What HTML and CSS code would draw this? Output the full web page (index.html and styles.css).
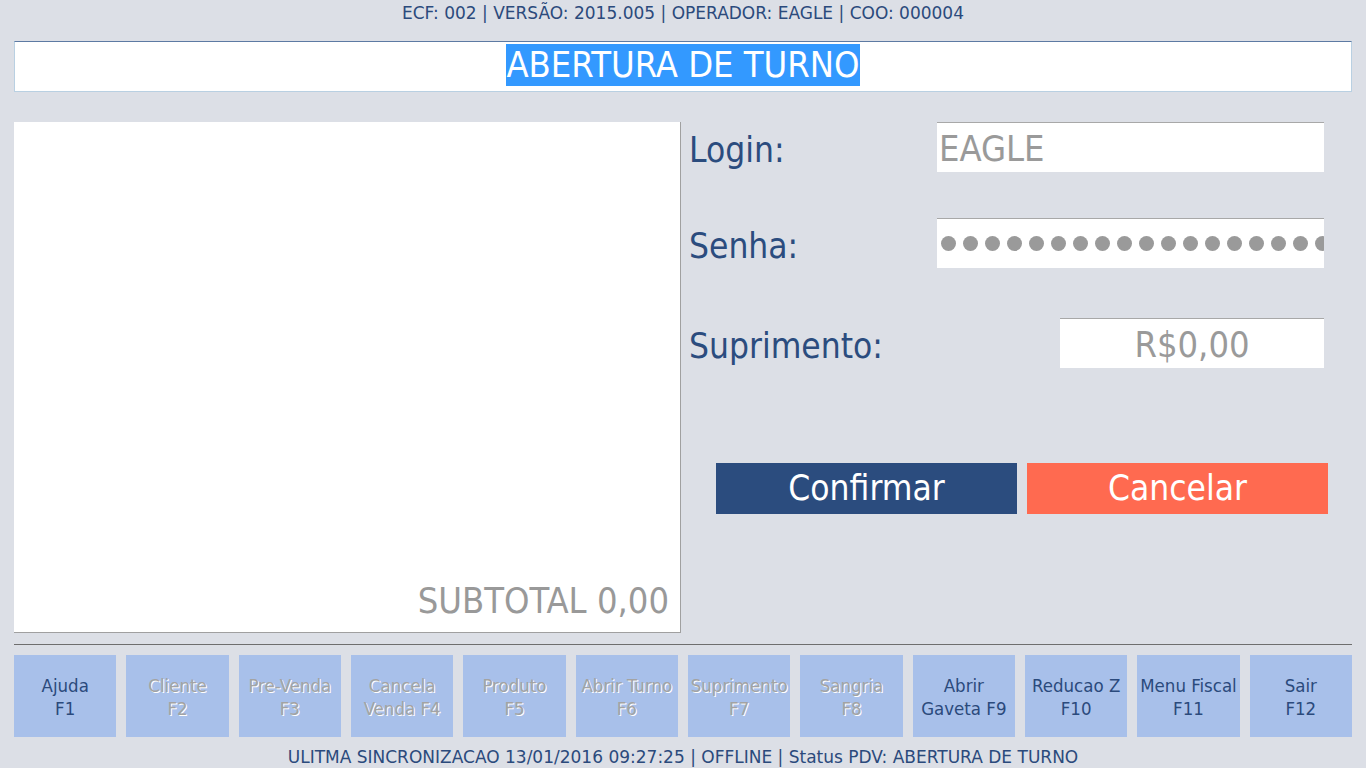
FILE: index.html
```html
<!DOCTYPE html>
<html lang="pt-BR">
<head>
<meta charset="utf-8">
<title>PDV - Abertura de Turno</title>
<link rel="stylesheet" href="styles.css">
</head>
<body>
<div class="app">
  <header class="info">ECF: 002 | VERSÃO: 2015.005 | OPERADOR: EAGLE | COO: 000004</header>
  <div class="title-box"><span class="title-sel">ABERTURA DE TURNO</span></div>
  <main class="main">
    <section class="receipt">
      <div class="subtotal">SUBTOTAL 0,00</div>
    </section>
    <section class="form">
      <div class="row row-login">
        <label class="label">Login:</label>
        <div class="field field-wide"><span class="field-text">EAGLE</span></div>
      </div>
      <div class="row row-senha">
        <label class="label">Senha:</label>
        <div class="field field-wide dots">
          <span class="dot"></span><span class="dot"></span><span class="dot"></span><span class="dot"></span><span class="dot"></span><span class="dot"></span><span class="dot"></span><span class="dot"></span><span class="dot"></span><span class="dot"></span><span class="dot"></span><span class="dot"></span><span class="dot"></span><span class="dot"></span><span class="dot"></span><span class="dot"></span><span class="dot"></span><span class="dot"></span><span class="dot"></span>
        </div>
      </div>
      <div class="row row-sup">
        <label class="label">Suprimento:</label>
        <div class="field field-money"><span class="field-text">R$0,00</span></div>
      </div>
      <div class="actions">
        <button class="btn btn-confirm">Confirmar</button>
        <button class="btn btn-cancel">Cancelar</button>
      </div>
    </section>
  </main>
  <hr class="sep">
  <nav class="keys">
    <div class="key">Ajuda<br>F1</div>
    <div class="key off">Cliente<br>F2</div>
    <div class="key off">Pre-Venda<br>F3</div>
    <div class="key off">Cancela<br>Venda F4</div>
    <div class="key off">Produto<br>F5</div>
    <div class="key off">Abrir Turno<br>F6</div>
    <div class="key off">Suprimento<br>F7</div>
    <div class="key off">Sangria<br>F8</div>
    <div class="key">Abrir<br>Gaveta F9</div>
    <div class="key">Reducao Z<br>F10</div>
    <div class="key">Menu Fiscal<br>F11</div>
    <div class="key">Sair<br>F12</div>
  </nav>
  <footer class="status">ULITMA SINCRONIZACAO 13/01/2016 09:27:25 | OFFLINE | Status PDV: ABERTURA DE TURNO</footer>
</div>
</body>
</html>
```

FILE: styles.css
```css
* { box-sizing: border-box; }
html, body { margin: 0; padding: 0; }
body {
  background: #dcdfe6;
  font-family: "DejaVu Sans Condensed", "DejaVu Sans", sans-serif;
  font-stretch: condensed;
  color: #2b4a7c;
  width: 1366px;
  height: 768px;
  overflow: hidden;
}
.app { padding: 0 14px; }
.info {
  height: 28px;
  padding-top: 3px;
  text-align: center;
  font-family: "DejaVu Sans", sans-serif;
  font-stretch: normal;
  font-size: 17px;
  line-height: 21px;
}
.title-box {
  margin-top: 13px;
  height: 51px;
  background: #fff;
  border: 1px solid #b9d0e2;
  border-top-color: #5d7aa3;
  text-align: center;
  padding-top: 2px;
}
.title-sel {
  display: inline-block;
  background: #3399ff;
  color: #fff;
  font-size: 36px;
  line-height: 42px;
  height: 42px;
}
.main {
  display: flex;
  margin-top: 30px;
  height: 511px;
}
.receipt {
  width: 667px;
  flex: none;
  background: #fff;
  border-right: 1px solid #a0a0a0;
  border-bottom: 1px solid #a0a0a0;
  display: flex;
  flex-direction: column;
  justify-content: flex-end;
  align-items: flex-end;
  padding: 0 11px 11px 0;
}
.subtotal {
  color: #999;
  font-size: 36px;
  line-height: 40px;
}
.form {
  flex: 1;
  display: flex;
  flex-direction: column;
  padding: 0 28px 0 8px;
}
.row {
  display: flex;
  align-items: center;
  justify-content: space-between;
  height: 50px;
}
.row-senha { margin-top: 46px; }
.row-sup { margin-top: 50px; }
.label {
  font-size: 35px;
  color: #2b4c7e;
  line-height: 50px;
  padding-top: 6px;
}
.field {
  height: 50px;
  background: #fff;
  border-top: 1px solid #a8a8a8;
  display: flex;
  align-items: center;
  overflow: hidden;
  white-space: nowrap;
}
.field-wide { width: 387px; padding-left: 2px; }
.field-money { width: 264px; justify-content: center; }
.field-text {
  color: #9a9a9a;
  font-size: 36px;
  line-height: 40px;
  padding-top: 3px;
}
.dots { gap: 7px; padding-left: 4px; }
.dot {
  flex: none;
  width: 15px;
  height: 15px;
  border-radius: 50%;
  background: #9a9a9a;
}
.actions {
  display: flex;
  gap: 10px;
  margin-top: 95px;
  padding-left: 27px;
  margin-right: -4px;
}
.btn {
  width: 301px;
  height: 51px;
  border: 0;
  padding: 0;
  font-family: inherit;
  font-stretch: condensed;
  font-size: 35px;
  color: #fff;
  cursor: pointer;
  line-height: 51px;
}
.btn-confirm { background: #2b4c7e; }
.btn-cancel { background: #ff6a50; }
.sep {
  border: 0;
  border-top: 1px solid #6e6e6e;
  margin: 11px 0 0 0;
  height: 0;
}
.keys {
  display: grid;
  grid-template-columns: repeat(12, 1fr);
  gap: 10px;
  margin-top: 10px;
}
.key {
  height: 82px;
  background: #a8c0ea;
  display: flex;
  align-items: center;
  justify-content: center;
  text-align: center;
  font-size: 18.5px;
  line-height: 23px;
  color: #2b4a7c;
  white-space: nowrap;
  padding-top: 2px;
}
.key.off {
  color: #a3a3a3;
  text-shadow: 1px 1px 0 #fff;
}
.status {
  text-align: center;
  font-family: "DejaVu Sans", sans-serif;
  font-stretch: normal;
  font-size: 17px;
  line-height: 21px;
  margin-top: 10px;
}
```
